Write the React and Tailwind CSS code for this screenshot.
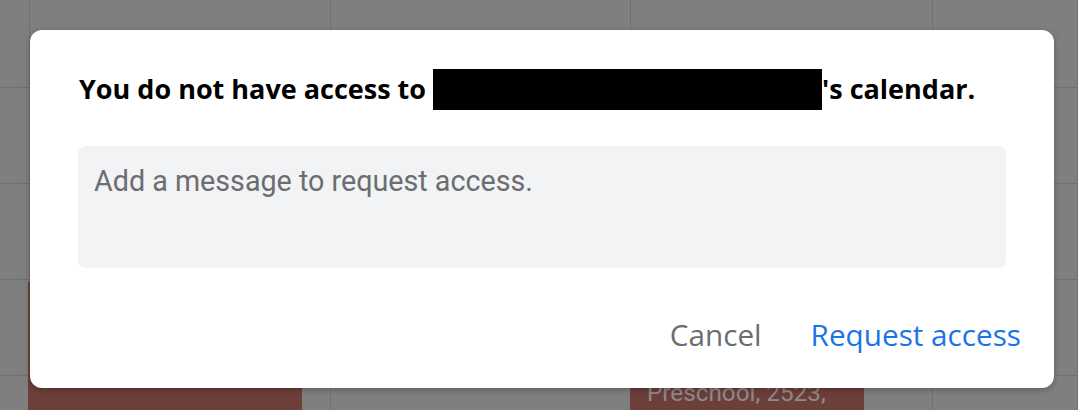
import React from "react";

export default function App() {
  const cells = Array.from({ length: 25 });
  return (
    <div className="relative w-[1078px] h-[410px] overflow-hidden bg-[#7f7f7f]">
      <div className="grid grid-cols-[30px_301px_300px_302px_1fr] grid-rows-[96px_96px_96px_96px_96px] -mt-[8px]">
        {cells.map((_, i) => (
          <div key={i} className="border-r border-b border-[#707070]" />
        ))}
      </div>

      <div className="absolute left-[28px] top-[282px] w-[274px] h-[140px] bg-[#6d3f3a]" />
      <div className="absolute left-[630px] top-[300px] w-[234px] h-[140px] bg-[#6d3f3a]">
        <div
          className="pl-[17px] pt-[79px] text-[24.3px] leading-[28px] text-[#8e8a89]"
          style={{ fontFamily: "Roboto, sans-serif" }}
        >
          Preschool, 2523,
        </div>
      </div>

      <div className="absolute left-[30px] top-[30px] w-[1024px] h-[358px] rounded-[12px] bg-white shadow-[0_2px_6px_rgba(0,0,0,0.25)]">
        <div className="px-[48px] pt-[39px]">
          <div
            className="flex items-center h-[41px] text-[27px] font-bold text-black"
            style={{ fontFamily: "'Open Sans', sans-serif" }}
          >
            <span className="pl-[1px]">You do not have access to&nbsp;</span>
            <span className="inline-block w-[389px] h-[41px] bg-black" />
            <span>'s calendar.</span>
          </div>
          <textarea
            readOnly
            placeholder="Add a message to request access."
            className="mt-[36px] block w-[928px] h-[122px] resize-none rounded-[8px] bg-[#f1f3f4] px-[16px] pt-[18px] text-[28.7px] leading-[34px] text-[#202124] placeholder:text-[#6b6d70] outline-none"
            style={{ fontFamily: "Roboto, sans-serif" }}
          />
        </div>
        <div
          className="mt-[43px] flex justify-end items-center gap-[49px] pr-[33px] text-[29.7px] font-medium"
          style={{ fontFamily: "'Open Sans', Roboto, sans-serif" }}
        >
          <button className="h-[48px] text-[#6b6d70]">Cancel</button>
          <button className="h-[48px] text-[#1a73e8]">Request access</button>
        </div>
      </div>
    </div>
  );
}
